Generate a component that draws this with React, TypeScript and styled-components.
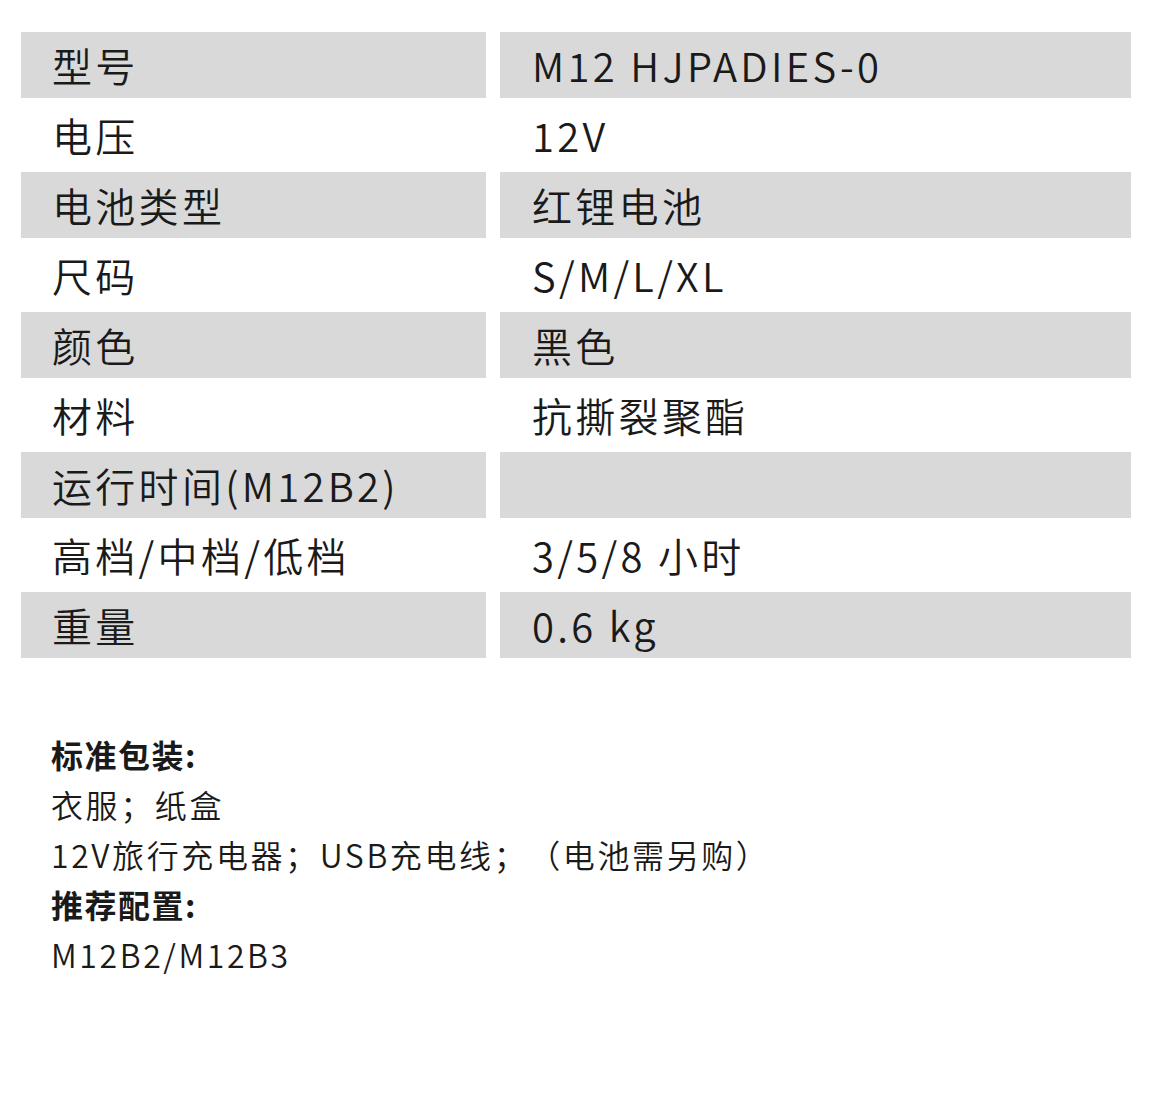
import React, { FC } from 'react';
import styled, { createGlobalStyle } from 'styled-components';

const GlobalStyle = createGlobalStyle`
  html, body {
    margin: 0;
    padding: 0;
    background: #ffffff;
  }
  body {
    font-family: "Noto Sans CJK SC", "Noto Sans", sans-serif;
    color: #1a1a1a;
    text-spacing-trim: space-all;
  }
`;

const StyledPage = styled.div`
  width: 1153px;
  height: 1094px;
  padding: 32px 22px 0 21px;
  box-sizing: border-box;
`;

const StyledTable = styled.div`
  display: grid;
  grid-template-columns: 465px 1fr;
  column-gap: 14px;
  row-gap: 4px;
`;

const StyledCell = styled.div<{ $shaded: boolean; $pad: number }>`
  height: 66px;
  display: flex;
  align-items: center;
  padding-left: ${({ $pad }) => $pad}px;
  background: ${({ $shaded }) => ($shaded ? '#d9d9d9' : 'transparent')};
  font-size: 40px;
  font-weight: 350;
  letter-spacing: 3.3px;
  white-space: nowrap;
`;

const StyledNotes = styled.div`
  margin-top: 71px;
  padding-left: 30px;
  font-size: 32px;
  font-weight: 350;
  line-height: 50px;
  letter-spacing: 2.6px;
`;

const StyledHeading = styled.div`
  font-weight: 700;
  letter-spacing: 1.5px;
`;

type Spec = { label: string; value: string };

const specs: Spec[] = [
  { label: '型号', value: 'M12 HJPADIES-0' },
  { label: '电压', value: '12V' },
  { label: '电池类型', value: '红锂电池' },
  { label: '尺码', value: 'S/M/L/XL' },
  { label: '颜色', value: '黑色' },
  { label: '材料', value: '抗撕裂聚酯' },
  { label: '运行时间(M12B2)', value: '' },
  { label: '高档/中档/低档', value: '3/5/8 小时' },
  { label: '重量', value: '0.6 kg' },
];

const SpecTable: FC = () => (
  <StyledTable>
    {specs.map((spec, i) => (
      <React.Fragment key={spec.label}>
        <StyledCell $shaded={i % 2 === 0} $pad={31}>{spec.label}</StyledCell>
        <StyledCell $shaded={i % 2 === 0} $pad={32}>{spec.value}</StyledCell>
      </React.Fragment>
    ))}
  </StyledTable>
);

const App: FC = () => (
  <StyledPage>
    <GlobalStyle />
    <SpecTable />
    <StyledNotes>
      <StyledHeading>标准包装:</StyledHeading>
      <div>衣服；纸盒</div>
      <div>12V旅行充电器；USB充电线；（电池需另购）</div>
      <StyledHeading>推荐配置:</StyledHeading>
      <div>M12B2/M12B3</div>
    </StyledNotes>
  </StyledPage>
);

export default App;
